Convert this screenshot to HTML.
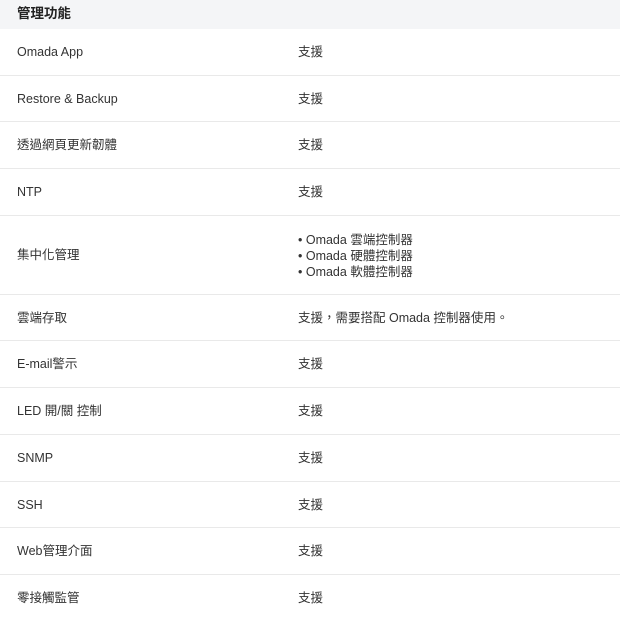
<!DOCTYPE html>
<html><head><meta charset="utf-8"><style>
body{margin:0;width:620px;height:620px;overflow:hidden;background:#fff;font-family:"Liberation Sans","Noto Sans CJK TC",sans-serif;color:#333;font-size:12.5px}
.h{height:29px;background:#f4f5f7;font-weight:bold;font-size:13.5px;color:#222;line-height:27px;padding-left:17px}
.r{position:relative;border-bottom:1px solid #e9e9e9;height:45.7px;line-height:47px}
.r div{position:absolute;top:0}
.a{left:17px}.b{left:298px}
.t{height:78px;line-height:79px}
.t .b{line-height:16px;top:16px!important}
</style></head><body>
<div class="h">管理功能</div>
<div class="r"><div class="a">Omada App</div><div class="b">支援</div></div>
<div class="r"><div class="a">Restore &amp; Backup</div><div class="b">支援</div></div>
<div class="r"><div class="a">透過網頁更新韌體</div><div class="b">支援</div></div>
<div class="r"><div class="a">NTP</div><div class="b">支援</div></div>
<div class="r t"><div class="a">集中化管理</div><div class="b">• Omada 雲端控制器<br>• Omada 硬體控制器<br>• Omada 軟體控制器</div></div>
<div class="r"><div class="a">雲端存取</div><div class="b">支援，需要搭配 Omada 控制器使用。</div></div>
<div class="r"><div class="a">E-mail警示</div><div class="b">支援</div></div>
<div class="r"><div class="a">LED 開/關 控制</div><div class="b">支援</div></div>
<div class="r"><div class="a">SNMP</div><div class="b">支援</div></div>
<div class="r"><div class="a">SSH</div><div class="b">支援</div></div>
<div class="r"><div class="a">Web管理介面</div><div class="b">支援</div></div>
<div class="r" style="border:0"><div class="a">零接觸監管</div><div class="b">支援</div></div>
</body></html>
